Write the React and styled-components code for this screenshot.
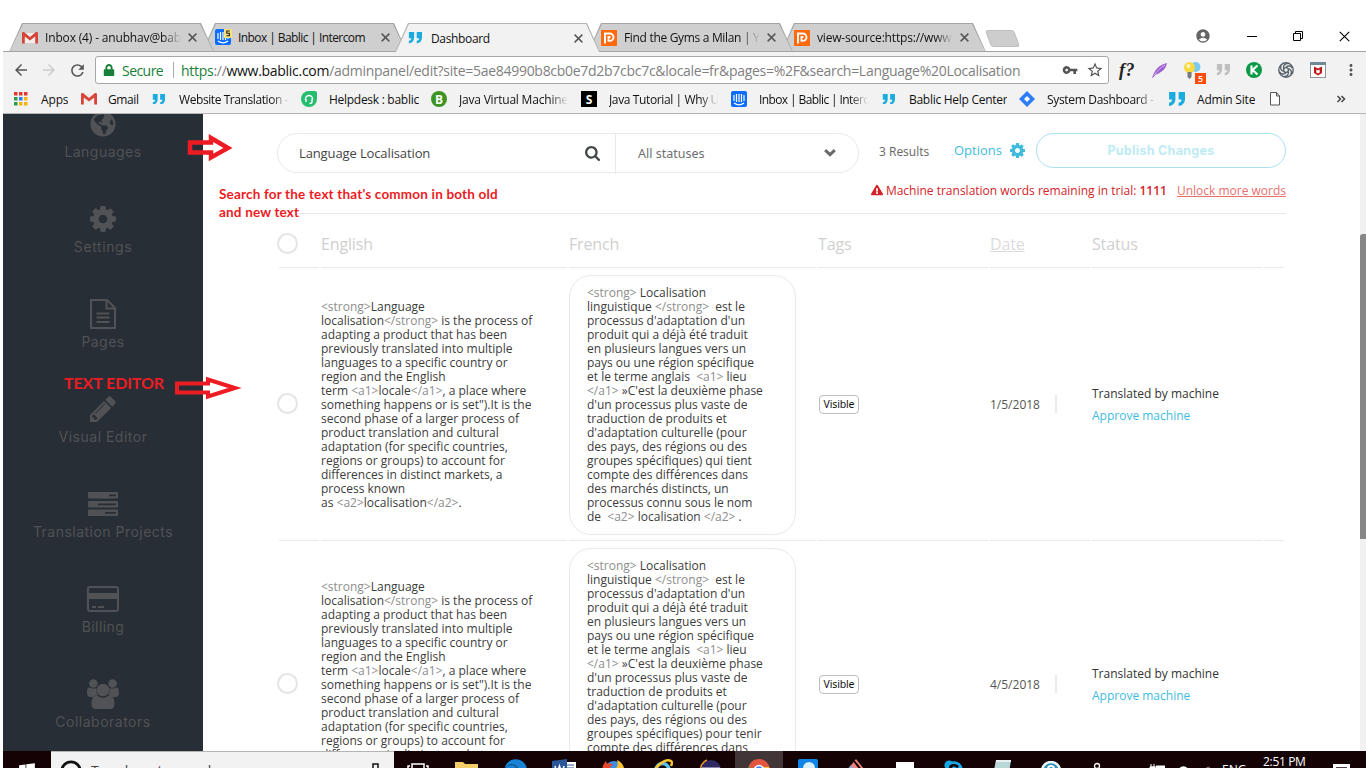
import React from "react";
import styled, { createGlobalStyle, css } from "styled-components";
import { FaGlobeAmericas, FaExclamationTriangle, FaWindows, FaEdge, FaSkype, FaLock } from "react-icons/fa";
import { MdAccountCircle, MdVpnKey, MdStarBorder, MdRefresh, MdArrowBack, MdArrowForward, MdMoreVert } from "react-icons/md";

const Global = createGlobalStyle`
  * { box-sizing: border-box; }
  html, body { margin: 0; background: #fff; overflow: hidden; }
  svg { display: block; flex: none; }
`;

const Screen = styled.div`
  position: relative;
  width: 1366px;
  height: 768px;
  padding: 23px 0 0 3px;
  overflow: hidden;
  display: flex;
  flex-direction: column;
  background: #fff;
  font-family: "Open Sans", "Liberation Sans", sans-serif;
  font-size: 12px;
  color: #333;
`;

/* ---------- browser frame ---------- */
const TabStrip = styled.div`
  height: 28px;
  flex: none;
  display: flex;
  padding-left: 6px;
`;
const TabShape = styled.div`
  width: 205px;
  height: 29px;
  flex: none;
  margin-right: -12px;
  position: relative;
  z-index: ${(p) => p.$z};
  background: ${(p) => (p.$active ? "#b4b4b4" : "#a4a4a4")};
  clip-path: polygon(13px 0, calc(100% - 13px) 0, 100% 100%, 0 100%);
  padding: 1px 1px ${(p) => (p.$active ? 0 : 1)}px;
`;
const TabBody = styled.div`
  height: 100%;
  display: flex;
  align-items: center;
  padding: 0 14px 0 12px;
  background: ${(p) => (p.$active ? "#f2f2f2" : "#cfcfcf")};
  clip-path: polygon(13px 0, calc(100% - 13px) 0, 100% 100%, 0 100%);
`;
const Fade = styled.span`
  white-space: nowrap;
  overflow: hidden;
  ${(p) =>
    p.$fade &&
    css`
      mask-image: linear-gradient(to right, #000 calc(100% - 18px), transparent);
    `}
`;
const TabIcon = styled.span`
  width: 17px;
  flex: none;
`;
const TabTitle = styled(Fade)`
  width: 136px;
  margin-left: 6px;
  color: #111;
  letter-spacing: ${(p) => p.$ls || 0}px;
`;
const TabClose = styled.span`
  margin-left: 7px;
`;
const NewTab = styled.div`
  width: 29px;
  height: 17px;
  margin: 7px 0 0 14px;
  background: #cdcdcd;
  border: 1px solid #bdbdbd;
  border-radius: 3px;
  transform: skewX(20deg);
`;
const WindowButtons = styled.div`
  margin-left: auto;
  display: flex;
  align-items: center;
  height: 26px;
  gap: 36px;
  padding-right: 16px;
`;
const Toolbar = styled.div`
  flex: none;
  height: 36px;
  border-top: 1px solid #a2a2a2;
  background: #f2f2f2;
  display: flex;
  align-items: center;
  padding: 1px 0 0 9px;
`;
const NavButtons = styled.div`
  width: 83px;
  display: flex;
  gap: 10px;
  color: #555;
`;
const AddressBar = styled.div`
  width: 1014px;
  height: 28px;
  border: 1px solid #a8a8a8;
  border-radius: 3px;
  background: #fff;
  display: flex;
  align-items: center;
  padding: 0 4px 0 7px;
  font-size: 14px;
`;
const AddressActions = styled.span`
  display: flex;
  align-items: center;
  gap: 8px;
  color: #555;
`;
const Secure = styled.span`
  color: #188038;
  margin-left: 7px;
  width: 51px;
  letter-spacing: -0.55px;
`;
const Pipe = styled.i`
  width: 1px;
  height: 16px;
  background: #aaa;
  margin-right: 7px;
`;
const Url = styled.span`
  color: #808080;
  flex: 1;
  white-space: nowrap;
  letter-spacing: -0.285px;
  em { font-style: normal; color: #111; }
  b { font-weight: 400; color: #188038; }
`;
const Extensions = styled.div`
  display: flex;
  align-items: center;
  gap: 16px;
  padding-left: 10px;
`;
const FnMark = styled.span`
  width: 17px;
  font: italic bold 18px "Liberation Serif", serif;
  letter-spacing: 0.5px;
  color: #222;
`;
const Bulb = styled.span`
  position: relative;
  width: 16px;
`;
const Badge = styled.span`
  position: absolute;
  left: 11px;
  top: 11px;
  width: 11px;
  height: 11px;
  background: #ff4b0a;
  color: #fff;
  font-size: 9px;
  font-weight: 600;
  line-height: 11px;
  text-align: center;
`;
const Bookmarks = styled.div`
  flex: none;
  height: 27px;
  background: #f2f2f2;
  border-bottom: 1px solid #b6b4b6;
  display: flex;
  align-items: center;
  padding: 0 0 2px 11px;
`;
const Bookmark = styled.div`
  display: flex;
  align-items: center;
  width: ${(p) => p.$w}px;
  flex: none;
`;
const BookmarkIcon = styled.span`
  width: ${(p) => p.$w || 28}px;
  flex: none;
`;
const BookmarkText = styled(Fade)`
  color: #111;
  width: ${(p) => (p.$fade ? p.$fade + "px" : "auto")};
  letter-spacing: ${(p) => p.$ls || 0}px;
`;
const Letter = styled.span`
  display: flex;
  align-items: center;
  justify-content: center;
  width: 16px;
  height: 16px;
  background: ${(p) => p.$bg};
  border-radius: ${(p) => p.$r || 0};
  color: #fff;
  font: bold 12px "Open Sans", sans-serif;
`;

/* ---------- page ---------- */
const Page = styled.div`
  height: 637px;
  flex: none;
  display: flex;
  overflow: hidden;
`;
const Sidebar = styled.nav`
  width: 200px;
  flex: none;
  background: #282e35;
  color: #505256;
`;
const SideItem = styled.a`
  height: 95px;
  display: flex;
  flex-direction: column;
  align-items: center;
  font: 14px Inter, "Open Sans", sans-serif;
  letter-spacing: ${(p) => p.$ls}px;
  &:first-child { margin-top: -7px; }
`;
const SideIcon = styled.span`
  height: 36px;
  padding-bottom: 2px;
  display: flex;
  align-items: center;
`;
const Main = styled.main`
  flex: 1;
  display: flex;
  flex-direction: column;
  padding: 19px 0 0 74px;
`;
const Controls = styled.div`
  display: flex;
  height: 41px;
  align-items: flex-start;
  flex: none;
`;
const SearchPill = styled.div`
  width: 582px;
  height: 40px;
  border: 1px solid #e7e9eb;
  border-radius: 20px;
  display: flex;
  align-items: center;
`;
const SearchField = styled.div`
  width: 338px;
  height: 41px;
  border-right: 1px solid #e7e9eb;
  display: flex;
  align-items: center;
  justify-content: space-between;
  padding: 0 15px 0 21px;
  font-size: 13px;
  letter-spacing: -0.12px;
  color: #444;
`;
const StatusSelect = styled.div`
  flex: 1;
  display: flex;
  align-items: center;
  justify-content: space-between;
  padding: 0 22px 0 22px;
  font: 12.5px "Noto Sans", sans-serif;
  color: #707070;
`;
const Results = styled.span`
  width: 75px;
  margin-left: 20px;
  line-height: 37px;
  color: #666;
`;
const Options = styled.a`
  width: 82px;
  height: 34px;
  display: flex;
  align-items: center;
  gap: 8px;
  color: #3fbcdc;
  font-size: 13px;
`;
const Publish = styled.button`
  width: 250px;
  height: 35px;
  padding: 0;
  border: 1px solid #a9e1ee;
  border-radius: 18px;
  background: #fff;
  color: #bdebf4;
  font: 700 12.5px Inter, sans-serif;
  letter-spacing: 0.3px;
`;
const Warning = styled.div`
  width: 1009px;
  height: 40px;
  flex: none;
  border-bottom: 1px solid #e9e9ec;
  display: flex;
  justify-content: flex-end;
  align-items: center;
  padding-bottom: 7px;
  color: #d2232a;
  svg { margin-right: 3px; }
  b { font-weight: 600; }
`;
const Unlock = styled.a`
  margin-left: 10px;
  color: #e8706e;
  text-decoration: underline;
`;
const GridRow = styled.div`
  flex: none;
  display: grid;
  grid-template-columns: 40px 246px 247px 170px 100px 170px 20px;
  column-gap: 2px;
  margin-left: 2px;
  height: ${(p) => p.$h}px;
`;
const HeadCell = styled.div`
  border-bottom: 1px solid #e9e9ec;
  display: flex;
  align-items: center;
  margin-top: 7px;
  font-size: 16px;
  letter-spacing: -0.15px;
  color: ${(p) => (p.$soft ? "#dcdcdc" : "#cfcfcf")};
  text-decoration: ${(p) => (p.$soft ? "underline" : "none")};
`;
const Cell = styled.div`
  border-bottom: 1px solid #e9e9ec;
  display: flex;
  align-items: center;
  padding: ${(p) => (p.$mid ? "6px 0" : "7px 0 5px")};
`;
const Radio = styled.i`
  width: 21px;
  height: 21px;
  flex: none;
  margin: 0 0 1px -2px;
  border: 2px solid #e4e4e4;
  border-radius: 50%;
`;
const Copy = styled.div`
  line-height: 14px;
  white-space: pre;
  color: #3c3c3c;
`;
const Tag = styled.span`
  color: #8d8d8d;
`;
const FrenchBox = styled.div`
  width: 227px;
  height: 100%;
  flex: none;
  border: 1px solid #e7e9eb;
  border-radius: 22px;
  padding: 10px 17px;
`;
const Visible = styled.span`
  width: 40px;
  height: 19px;
  margin-left: 1px;
  border: 1px solid #bdbdbd;
  border-radius: 4px;
  font: 10.5px/17px "Noto Sans", sans-serif;
  text-align: center;
  color: #111;
  letter-spacing: -0.15px;
`;
const DateText = styled.span`
  display: flex;
  align-items: center;
  width: 67px;
  height: 18px;
  border-right: 2px solid #e9ecef;
  color: #555;
`;
const Status = styled.div`
  display: flex;
  flex-direction: column;
  line-height: 22px;
  a { color: #3fbcdc; }
`;
const Scrollbar = styled.div`
  width: 6px;
  flex: none;
  background: #f1f1f1;
  padding-top: 120px;
`;
const Thumb = styled.div`
  height: 305px;
  background: #868686;
  border-radius: 3px 0 0 0;
`;

/* ---------- annotations laid over the page ---------- */
const ArrowMark = styled.svg`
  position: absolute;
  left: ${(p) => p.$x}px;
  top: ${(p) => p.$y}px;
`;
const Note = styled.div`
  position: absolute;
  left: ${(p) => p.$x}px;
  top: ${(p) => p.$y}px;
  white-space: pre;
  font: bold ${(p) => p.$fs}px/18px Lato, sans-serif;
  letter-spacing: ${(p) => p.$ls || 0}px;
  color: #ed1c24;
`;
const NoteFill = styled.span`
  background: #fff;
`;

/* ---------- taskbar ---------- */
const Taskbar = styled.footer`
  height: 40px;
  flex: none;
  display: flex;
  background: #140204;
  color: #fff;
`;
const Start = styled.div`
  width: 48px;
  display: flex;
  justify-content: center;
  padding: 11px 0 0 0;
`;
const Cortana = styled.div`
  width: 343px;
  background: #f2f2f2;
  border-top: 1px solid #b5b5b5;
  color: #444;
  display: flex;
  align-items: flex-start;
  padding: 8px 14px 0 9px;
  font-size: 14px;
`;
const CortanaText = styled.span`
  flex: 1;
  margin-left: 9px;
  margin-top: 1px;
  line-height: 19px;
  letter-spacing: -0.2px;
`;
const Task = styled.div`
  width: ${(p) => p.$w || 48.7}px;
  height: 40px;
  padding-top: ${(p) => p.$t ?? 8}px;
  display: flex;
  justify-content: center;
  align-items: flex-start;
  background: ${(p) => (p.$on ? "#413538" : "transparent")};
`;
const Clock = styled.div`
  width: 66px;
  text-align: center;
  line-height: 21px;
  letter-spacing: -0.35px;
  white-space: nowrap;
`;

/* ---------- drawings ---------- */
const Gmail = () => (
  <svg width="16" height="14" viewBox="0 0 16 14">
    <path d="M1 2h14v10H1z" fill="#f1eeee" />
    <path d="M0 2.200C0 1 1.400.6 2.300 1.300L8 6l5.700-4.700C14.600.6 16 1 16 2.200V12.500h-2.800V5.500L8 9.600 2.800 5.500v7H0z" fill="#d6453a" />
  </svg>
);
const Quotes = ({ w = 15, color = "#19acdd" }) => (
  <svg width={w} height={w * 0.82} viewBox="0 0 16 13">
    <path d="M1 0h6v6c0 4-2 6.500-6 7v-3c2-.3 2.700-1 2.700-3H1zM10 0h6v6c0 4-2 6.500-6 7v-3c2-.3 2.700-1 2.700-3H10z" fill={color} />
  </svg>
);
const Intercom = ({ badge }) => (
  <svg width="17" height="17" viewBox="0 0 17 17">
    <rect x="0" y="0" width="16" height="16" rx="2" fill="#0b6cff" />
    <path d="M3 4v6M5.500 3v8M8 3v8M10.500 3v8M13 4v6M3 12c3 2.300 7 2.300 10 0" stroke="#fff" strokeWidth="1.200" fill="none" />
    {badge && (
      <>
        <rect x="9" y="0" width="8" height="9" fill="#f6df7c" />
        <path d="M14.800 2h-3v2.300h2.600v2.500h-2.900" stroke="#222" strokeWidth="1.100" fill="none" />
      </>
    )}
  </svg>
);
const OrangeD = () => (
  <svg width="16" height="16" viewBox="0 0 16 16">
    <rect width="16" height="16" fill="#ff6a0d" />
    <path d="M4 13.500V3.500h4.800a3.700 3.700 0 0 1 0 7.400H7.500V7H9.500" stroke="#fff" strokeWidth="1.900" fill="none" />
  </svg>
);
const Cross = ({ s = 9, w = 1.6, c = "#555" }) => (
  <svg width={s} height={s} viewBox="0 0 10 10">
    <path d="M.7.7l8.600 8.600M9.300.7L.7 9.300" stroke={c} strokeWidth={w} />
  </svg>
);
const AppsGrid = () => (
  <svg width="14" height="14" viewBox="0 0 14 14">
    {["#e8392e", "#e8392e", "#e8392e", "#2a9d4b", "#2e7de9", "#f1b50e", "#2a9d4b", "#f1b50e", "#f1b50e"].map((c, i) => (
      <rect key={i} x={(i % 3) * 5} y={Math.floor(i / 3) * 5} width="3.500" height="3.500" fill={c} />
    ))}
  </svg>
);
const Headset = () => (
  <svg width="16" height="16" viewBox="0 0 16 16">
    <path d="M8 0h6a2 2 0 0 1 2 2v6a8 8 0 1 1-8-8z" fill="#25bd6f" />
    <path d="M4.500 9V8a3.500 3.500 0 0 1 7 0v1M5 8v3M11 8v3c0 1-1 1.500-2.500 1.500" stroke="#fff" strokeWidth="1.400" fill="none" />
  </svg>
);
const Jira = () => (
  <svg width="16" height="16" viewBox="0 0 16 16">
    <path d="M8 0l8 8-8 8-8-8z" fill="#2a7df5" />
    <path d="M8 5l3 3-3 3-3-3z" fill="#fff" />
  </svg>
);
const Feather = () => (
  <svg width="16" height="17" viewBox="0 0 16 17">
    <path d="M0 16.500C2 9 6 3 15 1c-1 5-4 9-11 11.500z" fill="#9a5fd0" />
    <path d="M2 13.500C5 9 8 6 13 3" stroke="#d9c0f0" fill="none" />
  </svg>
);
const Bulbs = () => (
  <svg width="17" height="17" viewBox="0 0 17 17">
    <circle cx="11.500" cy="5" r="5" fill="#7cc9ee" />
    <circle cx="5.500" cy="5.500" r="5.500" fill="#f9da45" />
    <circle cx="4.500" cy="4" r="2" fill="#fff6bd" />
    <path d="M3.500 10h4v5l-2 2-2-2z" fill="#77797c" />
  </svg>
);
const GreenK = () => (
  <svg width="16" height="16" viewBox="0 0 16 16">
    <circle cx="8" cy="8" r="8" fill="#0a9a47" />
    <path d="M5.500 3.500v9M11.500 3.500L6.500 8l5 4.500" stroke="#fff" strokeWidth="2.200" fill="none" />
  </svg>
);
const Knot = () => (
  <svg width="16" height="16" viewBox="0 0 16 16" fill="none" stroke="#59626c" strokeWidth="1.400">
    <circle cx="8" cy="8" r="7.200" />
    {[0, 60, 120, 180, 240, 300].map((a) => (
      <path key={a} d="M8 5.200c2-2 5-1.500 6.500 1" transform={`rotate(${a} 8 8)`} />
    ))}
    <circle cx="8" cy="8" r="2.400" />
  </svg>
);
const Shield = () => (
  <svg width="16" height="16" viewBox="0 0 16 16">
    <rect x=".5" y=".5" width="15" height="15" fill="#fff" stroke="#8b959b" />
    <rect width="16" height="3" fill="#6f8995" />
    <path d="M4 4.500l4 2 4-2V11l-4 2.500L4 11z" fill="#c01818" />
    <path d="M6.300 7.500L8 8.500l1.700-1v3L8 11.500l-1.700-1z" fill="#fff" />
  </svg>
);
const Gear = ({ s }) => (
  <svg width={s} height={s} viewBox="128 128 1536 1536" fill="currentColor">
    <path d="M1152 896q0-106-75-181t-181-75-181 75-75 181 75 181 181 75 181-75 75-181zm512-109v222q0 12-8 23t-20 13l-185 28q-19 54-39 91 35 50 107 138 10 12 10 25t-9 23q-27 37-99 108t-94 71q-12 0-26-9l-138-108q-44 23-91 38-16 136-29 186-7 28-36 28h-222q-14 0-24.500-8.500t-11.500-21.500l-28-184q-49-16-90-37l-141 107q-10 9-25 9-14 0-25-11-126-114-165-168-7-10-7-23 0-12 8-23 15-21 51-66.500t54-70.500q-27-50-41-99l-183-27q-13-2-21-12.500t-8-23.500v-222q0-12 8-23t19-13l186-28q14-46 39-92-40-57-107-138-10-12-10-24 0-10 9-23 26-36 98.500-107.500t94.500-71.500q13 0 26 10l138 107q44-23 91-38 16-136 29-186 7-28 36-28h222q14 0 24.500 8.500t11.500 21.500l28 184q49 16 90 37l142-107q9-9 24-9 13 0 25 10 129 119 165 170 7 8 7 22 0 12-8 23-15 21-51 66.500t-54 70.500q26 50 41 98l183 28q13 2 21 12.500t8 23.500z" />
  </svg>
);
const Search = () => (
  <svg width="15" height="15" viewBox="64 128 1664 1664" fill="#434649">
    <path d="M1216 832q0-185-131.500-316.500t-316.500-131.500-316.500 131.500-131.500 316.500 131.500 316.500 316.500 131.500 316.500-131.500 131.500-316.500zm512 832q0 52-38 90t-90 38q-54 0-90-38l-343-342q-179 124-399 124-143 0-273.500-55.500t-225-150-150-225-55.500-273.500 55.500-273.500 150-225 225-150 273.500-55.500 273.500 55.500 225 150 150 225 55.500 273.500q0 220-124 399l343 343q37 37 37 90z" />
  </svg>
);
const Chevron = () => (
  <svg width="12" height="8" viewBox="0 0 12 8">
    <path d="M1.200 1.200L6 5.600l4.800-4.400" stroke="#6b6b6b" strokeWidth="3" fill="none" />
  </svg>
);
const PageIcon = () => (
  <svg width="26" height="30" viewBox="0 0 26 30" fill="none" stroke="currentColor" strokeWidth="2">
    <path d="M1 1h16l8 8v20H1zM16.500 1v8.500H25M6.500 14.500h13M6.500 18.500h13M6.500 23h13" />
  </svg>
);
const Pencil = () => (
  <svg width="26" height="26" viewBox="128 128 1536 1536" fill="currentColor">
    <path d="M491 1536l91-91-235-235-91 91v107h128v128h107zm523-928q0-22-22-22-10 0-17 7l-542 542q-7 7-7 17 0 22 22 22 10 0 17-7l542-542q7-7 7-17zm-54-192l416 416-832 832h-416v-416zm683 96q0 53-37 90l-166 166-416-416 166-165q36-38 90-38 53 0 91 38l235 234q37 39 37 91z" />
  </svg>
);
const Tasks = () => (
  <svg width="30" height="24" viewBox="0 0 30 24">
    {[[0, 21], [9, 10], [17.5, 17]].map(([y, x]) => (
      <g key={y}>
        <rect y={y} width="30" height="6.500" rx="1" fill="currentColor" />
        <rect x={x} y={y + 2.5} width={28 - x} height="1.700" fill="#282e35" />
      </g>
    ))}
  </svg>
);
const Card = () => (
  <svg width="32" height="26" viewBox="0 0 32 26">
    <rect x="1" y="1" width="30" height="24" rx="2" fill="none" stroke="currentColor" strokeWidth="2" />
    <path d="M1 7h30v6H1zM5 20h4v2H5zM11 20h6v2h-6z" fill="currentColor" />
  </svg>
);
const Users = () => (
  <svg width="32" height="30" viewBox="0 0 32 30" fill="currentColor">
    <circle cx="6.400" cy="4.500" r="4.300" />
    <circle cx="25.600" cy="4.500" r="4.300" />
    <path d="M0 14c0-3.500.5-5.500 2-5.500 1 0 2 1 4.500 1 1.300 0 2 0 3-.5-.3 3 .2 5.200 1.600 7.200-2 0-3.700.7-4.700 1.800H3c-2 0-3-1.200-3-4zM32 14c0-3.500-.5-5.500-2-5.500-1 0-2 1-4.500 1-1.300 0-2 0-3-.5.3 3-.2 5.200-1.600 7.200 2 0 3.700.7 4.700 1.800H29c2 0 3-1.200 3-4z" />
    <circle cx="16" cy="11" r="6.300" />
    <path d="M4.500 25c0-5 1.500-8.500 5-8.500 1.500 0 3 2.300 6.500 2.300s5-2.300 6.500-2.300c3.500 0 5 3.500 5 8.500 0 3.500-1.500 5-4 5h-15c-2.500 0-4-1.500-4-5z" />
  </svg>
);
const Folder = () => (
  <svg width="23" height="20" viewBox="0 0 23 20">
    <path d="M0 0h8l2 2h13v18H0z" fill="#f2cd68" />
    <path d="M0 6h23v14H0z" fill="#fbe08e" />
  </svg>
);
const HelpDisc = () => (
  <svg width="20" height="20" viewBox="0 0 20 20">
    <circle cx="10" cy="10" r="9" fill="#2c8fb8" stroke="#eef7fb" strokeWidth="2.500" />
    <path d="M7 8a3 3 0 0 1 6 0c0 2-3 2-3 4" fill="none" stroke="#fff" strokeWidth="2" />
  </svg>
);
const Eclipse = () => (
  <svg width="22" height="22" viewBox="0 0 22 22">
    <circle cx="12" cy="11" r="10" fill="#2f2a63" />
    <path d="M8 1a11 11 0 0 0 0 20" stroke="#ef9a2b" strokeWidth="1.500" fill="none" />
    <path d="M3 8.500h18M3 11.500h18" stroke="#8a86b0" />
  </svg>
);
const Chrome = () => (
  <svg width="22" height="22" viewBox="0 0 22 22">
    <circle cx="11" cy="11" r="11" fill="#e2553f" />
    <path d="M1 7l6 8-1 6A11 11 0 0 1 1 7z" fill="#43a352" />
    <path d="M21 8H11l5 12a11 11 0 0 0 5-12z" fill="#f4c63b" />
    <circle cx="11" cy="11" r="4.500" fill="#4285f4" stroke="#fff" strokeWidth="1.500" />
  </svg>
);
const Explorer = () => (
  <svg width="22" height="22" viewBox="0 0 22 22" fill="none">
    <path d="M18 11H5a6.500 6.500 0 1 1 13 0z" stroke="#58c2f0" strokeWidth="3.500" />
    <path d="M1 17C3 8 14-1 20 2c1.500 1 1 3 0 5" stroke="#f6c62f" strokeWidth="2.500" />
  </svg>
);
const Firefox = () => (
  <svg width="24" height="22" viewBox="0 0 24 22">
    <circle cx="13" cy="12" r="10" fill="#3c8fe0" />
    <path d="M1 13C1 8 3 4 5 2l1 3c3-1 5 0 6 1-4 1-3 4 0 5l-2 10C5 20 1 17 1 13z" fill="#e8452b" />
    <path d="M16 1c5 2 8 7 7 12s-5 8-10 8c5-3 6-8 2-12 2-2 2-5 1-8z" fill="#fbc02d" />
  </svg>
);

/* ---------- content ---------- */
const tabs = [
  { icon: <Gmail />, title: "Inbox (4) - anubhav@bablic", fade: 1, ls: -0.16 },
  { icon: <Intercom badge />, title: "Inbox | Bablic | Intercom", ls: -0.58 },
  { icon: <Quotes w={14} />, title: "Dashboard", active: true, ls: -0.35 },
  { icon: <OrangeD />, title: "Find the Gyms a Milan | Your", fade: 1, ls: -0.32 },
  { icon: <OrangeD />, title: "view-source:https://www.bablic", fade: 1, ls: -0.18 },
];
const bookmarks = [
  { w: 67, iw: 27, icon: <AppsGrid />, text: "Apps", ls: -0.15 },
  { w: 71, iw: 27, icon: <Gmail />, text: "Gmail", ls: -0.4 },
  { w: 149, iw: 27, icon: <Quotes w={13} />, text: "Website Translation - Bablic", fade: 110, ls: -0.42 },
  { w: 130, icon: <Headset />, text: "Helpdesk : bablic", ls: -0.28 },
  { w: 150, icon: <Letter $bg="#3c9420" $r="50%">B</Letter>, text: "Java Virtual Machine Guide", fade: 109, ls: -0.2 },
  { w: 150, icon: <Letter $bg="#000">S</Letter>, text: "Java Tutorial | Why Use Java", fade: 109, ls: -0.38 },
  { w: 151, icon: <Intercom />, text: "Inbox | Bablic | Intercom", fade: 109, ls: -0.6 },
  { w: 137, iw: 27, icon: <Quotes w={13} />, text: "Bablic Help Center", ls: -0.28 },
  { w: 149, icon: <Jira />, text: "System Dashboard - Jira", fade: 109, ls: -0.32 },
  { w: 101, iw: 29, icon: <Quotes w={17} />, text: "Admin Site", ls: -0.2 },
];
const sideItems = [
  { icon: <FaGlobeAmericas size={26} />, text: "Languages", ls: 0.48 },
  { icon: <Gear s={26} />, text: "Settings", ls: 0.6 },
  { icon: <PageIcon />, text: "Pages", ls: 0.45 },
  { icon: <Pencil />, text: "Visual Editor", ls: 0.5 },
  { icon: <Tasks />, text: "Translation Projects", ls: 0.48 },
  { icon: <Card />, text: "Billing", ls: 0.45 },
  { icon: <Users />, text: "Collaborators", ls: 0.5 },
];
const english = `<strong>Language
localisation</strong> is the process of
adapting a product that has been
previously translated into multiple
languages to a specific country or
region and the English
term <a1>locale</a1>, a place where
something happens or is set").It is the
second phase of a larger process of
product translation and cultural
adaptation (for specific countries,
regions or groups) to account for
differences in distinct markets, a
process known
as <a2>localisation</a2>.`;
const frenchStart = `<strong> Localisation
linguistique </strong>  est le
processus d'adaptation d'un
produit qui a déjà été traduit
en plusieurs langues vers un
pays ou une région spécifique
et le terme anglais  <a1> lieu
</a1> »C'est la deuxième phase
d'un processus plus vaste de
traduction de produits et
d'adaptation culturelle (pour
des pays, des régions ou des
`;
const frenchEnd = `
compte des différences dans
des marchés distincts, un
processus connu sous le nom
de  <a2> localisation </a2> .`;
const rows = [
  { h: 273, date: "1/5/2018", french: frenchStart + "groupes spécifiques) qui tient" + frenchEnd },
  { h: 287, date: "4/5/2018", french: frenchStart + "groupes spécifiques) pour tenir" + frenchEnd },
];

const Marked = ({ text }) =>
  text.split(/(<[^>]+>)/).map((part, i) => (part.startsWith("<") ? <Tag key={i}>{part}</Tag> : part));

export default function App() {
  return (
    <>
      <Global />
      <Screen>
        <TabStrip>
          {tabs.map((t, i) => (
            <TabShape key={t.title} $active={t.active} $z={t.active ? 9 : 5 - i}>
              <TabBody $active={t.active}>
                <TabIcon>{t.icon}</TabIcon>
                <TabTitle $fade={t.fade} $ls={t.ls}>{t.title}</TabTitle>
                <TabClose><Cross /></TabClose>
              </TabBody>
            </TabShape>
          ))}
          <NewTab />
          <WindowButtons>
            <MdAccountCircle size={16} color="#666" />
            <svg width="10" height="10"><path d="M0 5.500h10" stroke="#000" /></svg>
            <svg width="10" height="10" fill="none" stroke="#000"><path d="M.5 2.500h7v7h-7zM2.500 2.500v-2h7v7h-2" /></svg>
            <Cross s={11} w={1} c="#000" />
          </WindowButtons>
        </TabStrip>
        <Toolbar>
          <NavButtons>
            <MdArrowBack size={18} />
            <MdArrowForward size={18} color="#ccc" />
            <MdRefresh size={19} />
          </NavButtons>
          <AddressBar>
            <FaLock size={12} color="#188038" />
            <Secure>Secure</Secure>
            <Pipe />
            <Url>
              <b>https</b>://<em>www.bablic.com</em>/adminpanel/edit?site=5ae84990b8cb0e7d2b7cbc7c&amp;locale=fr&amp;pages=%2F&amp;search=Language%20Localisation
            </Url>
            <AddressActions>
              <MdVpnKey size={16} />
              <MdStarBorder size={18} />
            </AddressActions>
          </AddressBar>
          <Extensions>
            <FnMark>f?</FnMark>
            <Feather />
            <Bulb><Bulbs /><Badge>5</Badge></Bulb>
            <Quotes w={14} color="#bfbfbf" />
            <GreenK />
            <Knot />
            <Shield />
            <MdMoreVert size={18} color="#555" />
          </Extensions>
        </Toolbar>
        <Bookmarks>
          {bookmarks.map((b) => (
            <Bookmark key={b.text} $w={b.w}>
              <BookmarkIcon $w={b.iw}>{b.icon}</BookmarkIcon>
              <BookmarkText $fade={b.fade} $ls={b.ls}>{b.text}</BookmarkText>
            </Bookmark>
          ))}
          <Bookmark $w={68}><svg width="12" height="14" fill="#fff" stroke="#555"><path d="M1.500.5h6l3 3.500v9h-9zM7.500.5V4h3" /></svg></Bookmark>
          <svg width="9" height="8" fill="none" stroke="#444" strokeWidth="1.500"><path d="M.5 1l3 3-3 3M4.500 1l3 3-3 3" /></svg>
        </Bookmarks>

        <Page>
          <Sidebar>
            {sideItems.map((s) => (
              <SideItem key={s.text} $ls={s.ls}>
                <SideIcon>{s.icon}</SideIcon>
                {s.text}
              </SideItem>
            ))}
          </Sidebar>
          <Main>
            <Controls>
              <SearchPill>
                <SearchField>Language Localisation<Search /></SearchField>
                <StatusSelect>All statuses<Chevron /></StatusSelect>
              </SearchPill>
              <Results>3 Results</Results>
              <Options>Options<Gear s={15} /></Options>
              <Publish>Publish Changes</Publish>
            </Controls>
            <Warning>
              <FaExclamationTriangle size={12} />
              <span>Machine translation words remaining in trial: <b>1111</b></span>
              <Unlock>Unlock more words</Unlock>
            </Warning>
            <GridRow $h={54}>
              <HeadCell><Radio /></HeadCell>
              <HeadCell>English</HeadCell>
              <HeadCell>French</HeadCell>
              <HeadCell>Tags</HeadCell>
              <HeadCell $soft>Date</HeadCell>
              <HeadCell>Status</HeadCell>
              <HeadCell />
            </GridRow>
            {rows.map((r) => (
              <GridRow key={r.date} $h={r.h}>
                <Cell $mid><Radio /></Cell>
                <Cell><Copy><Marked text={english} /></Copy></Cell>
                <Cell><FrenchBox><Copy><Marked text={r.french} /></Copy></FrenchBox></Cell>
                <Cell $mid><Visible>Visible</Visible></Cell>
                <Cell $mid><DateText>{r.date}</DateText></Cell>
                <Cell><Status><span>Translated by machine</span><a>Approve machine</a></Status></Cell>
                <Cell />
              </GridRow>
            ))}
          </Main>
          <Scrollbar><Thumb /></Scrollbar>
        </Page>

        <Taskbar>
          <Start><FaWindows size={18} /></Start>
          <Cortana>
            <svg width="22" height="22"><circle cx="11" cy="11" r="9.200" fill="none" stroke="#111" strokeWidth="2.800" /></svg>
            <CortanaText>Type here to search</CortanaText>
            <svg width="9" height="16" fill="none" stroke="#111" strokeWidth="1.500"><path d="M2 4h5v9H2z" /></svg>
          </Cortana>
          <Task $t={12}><svg width="22" height="16" fill="none" stroke="#fff" strokeWidth="1.500"><path d="M5 1h12v13H5zM3 3H1v9h2M19 3h2v9h-2" /></svg></Task>
          <Task $t={11}><Folder /></Task>
          <Task><FaEdge size={23} color="#1683d8" /></Task>
          <Task><svg width="24" height="22"><path d="M12 3h12v17H12z" fill="#fff" /><path d="M13 6h9M13 9h9" stroke="#2b579a" /><path d="M0 2l15-2v22L0 20z" fill="#2b579a" /><path d="M3 7l2 8 2.500-8 2.500 8 2-8" stroke="#fff" strokeWidth="1.500" fill="none" /></svg></Task>
          <Task><Firefox /></Task>
          <Task><Explorer /></Task>
          <Task><Eclipse /></Task>
          <Task $on><Chrome /></Task>
          <Task><svg width="20" height="22"><rect width="20" height="22" rx="2" fill="#1184e8" /><circle cx="11" cy="9" r="6" fill="#d8efff" /></svg></Task>
          <Task><svg width="20" height="22"><path d="M10 0l8 10-8 10-8-10z" fill="#ef827c" /><path d="M8 2l8 10" stroke="#140204" strokeWidth="2" /><path d="M0 12l5-6 5 8-4 6z" fill="#8aa7c6" /></svg></Task>
          <Task $t={11}><svg width="18" height="20"><rect width="18" height="20" fill="#fff" /></svg></Task>
          <Task><FaSkype size={22} color="#16a6e6" /></Task>
          <Task><svg width="22" height="22"><path d="M5 1h15l-3 20H1z" fill="#b9d6d9" /><path d="M5 1h15v2H5z" fill="#e9eeee" /></svg></Task>
          <Task $t={10}><HelpDisc /></Task>
          <Task $w={44} $t={11}><svg width="12" height="18" fill="none" stroke="#fff" strokeWidth="1.300"><circle cx="6" cy="4" r="2.500" /><path d="M6 7v4M1 15l5-4 5 4" /></svg></Task>
          <Task $w={24} $t={16}><svg width="10" height="8"><path d="M1 6l4-4 4 4" stroke="#ddd" fill="none" /></svg></Task>
          <Task $w={28} $t={13}><svg width="16" height="14"><path d="M7 2h9v10H7zM1 3h5M2 0v3M5 0v3M1 3v4h5V3z" fill="#fff" stroke="#fff" /></svg></Task>
          <Task $w={24} $t={13}><svg width="15" height="12"><path d="M2 11a4 4 0 0 1 1-6 5 5 0 0 1 9 0 4 4 0 0 1 1 6z" fill="#fff" /></svg></Task>
          <Task $w={22} $t={15}><svg width="12" height="12"><path d="M1 9a10 10 0 0 1 9-8" stroke="#888" fill="none" /></svg></Task>
          <Task $w={34} $t={10}>ENG</Task>
          <Clock>2:51 PM</Clock>
          <Task $t={13}><svg width="17" height="16"><path d="M0 0h17v13h-5l-3 3v-3H0z" fill="#fff" /><path d="M3 4h11M3 8h11" stroke="#140204" strokeWidth="1.500" /></svg></Task>
        </Taskbar>

        <ArrowMark $x={187} $y={134} width="46" height="28" viewBox="0 0 46 28">
          <path d="M3 8.500h21V4L41 14 24 23.500v-5H3z" fill="none" stroke="#ed1c24" strokeWidth="4.500" />
        </ArrowMark>
        <ArrowMark $x={174} $y={375} width="70" height="26" viewBox="0 0 70 26">
          <path d="M3 8.500h31V4.500L61 13 34 21.500v-4H3z" fill="none" stroke="#ed1c24" strokeWidth="4" />
        </ArrowMark>
        <Note $x={219} $y={185} $fs={13.5} $ls={0.18}>
          {"Search for the text that's common in both old\n"}
          <NoteFill>and new text</NoteFill>
        </Note>
        <Note $x={64} $y={374} $fs={16} $ls={-0.1}>TEXT EDITOR</Note>
      </Screen>
    </>
  );
}
